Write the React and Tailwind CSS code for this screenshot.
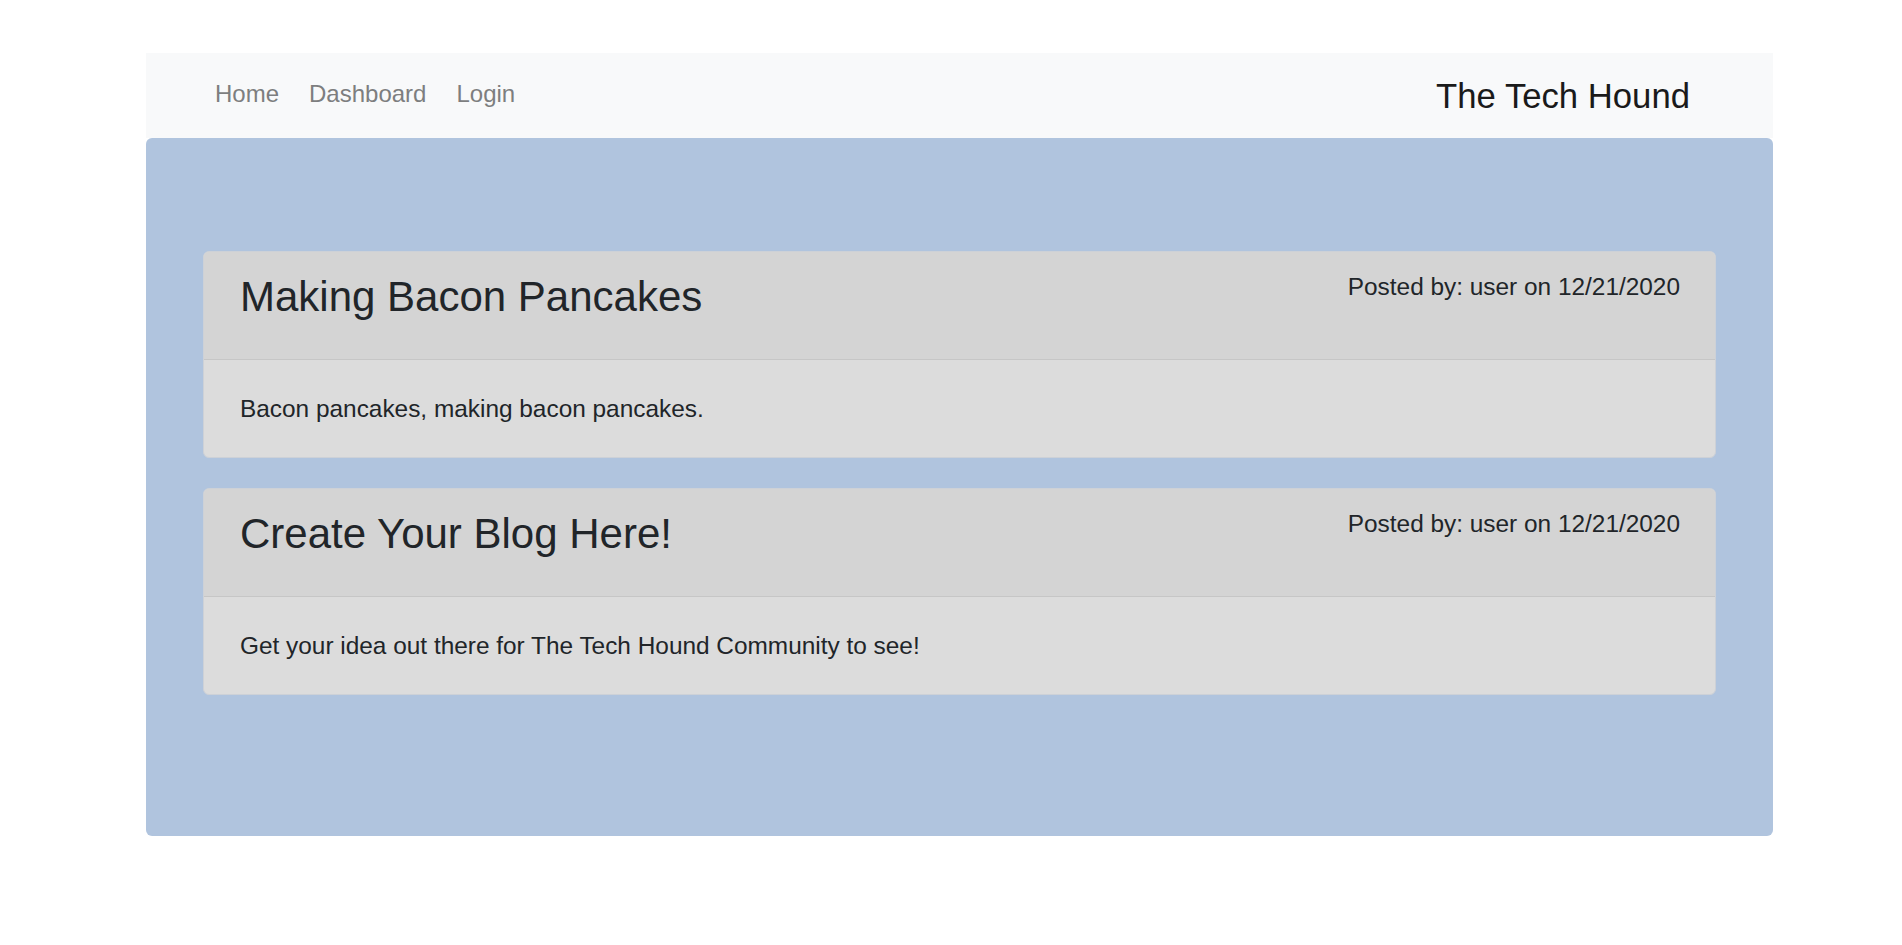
export default function App() {
  const posts = [
    {
      title: "Making Bacon Pancakes",
      meta: "Posted by: user on 12/21/2020",
      body: "Bacon pancakes, making bacon pancakes.",
    },
    {
      title: "Create Your Blog Here!",
      meta: "Posted by: user on 12/21/2020",
      body: "Get your idea out there for The Tech Hound Community to see!",
    },
  ];
  return (
    <div
      className="min-h-[945px] bg-white text-[#212529]"
      style={{ fontFamily: '"Liberation Sans", Arial, sans-serif' }}
    >
      <div className="pt-[53px] ml-[146px] w-[1627px]">
        <nav className="h-[85px] bg-[#f8f9fa] flex items-center justify-between pl-[54px] pr-[83px]">
          <div className="flex items-center text-[24px] leading-[36px] text-[#7d7e7f] pb-[3px]">
            <a className="px-[15px]">Home</a>
            <a className="px-[15px]">Dashboard</a>
            <a className="px-[15px]">Login</a>
          </div>
          <div className="text-[34.7px] leading-[40px] text-[#1a1a1a]">The Tech Hound</div>
        </nav>
        <main className="bg-[#b0c4de] rounded-[6px] pt-[113px] pb-[141px] px-[57px] flex flex-col gap-[30px]">
          {posts.map((p) => (
            <div
              key={p.title}
              className="border border-[#cdd1d7] rounded-[6px] bg-[#dcdcdc] overflow-hidden"
            >
              <div className="h-[108px] bg-[#d4d4d4] border-b border-[#c6c6c6] flex justify-between items-start pl-[36px] pr-[35px] pt-[17px]">
                <h3 className="text-[42px] leading-[1.2] mt-[3px] text-[#212529]">{p.title}</h3>
                <div className="text-[24.4px] leading-[36px] text-[#212529]">{p.meta}</div>
              </div>
              <div className="px-[36px] pt-[31px] pb-[30px] text-[24.4px] leading-[36px] text-[#212529]">{p.body}</div>
            </div>
          ))}
        </main>
      </div>
    </div>
  );
}
